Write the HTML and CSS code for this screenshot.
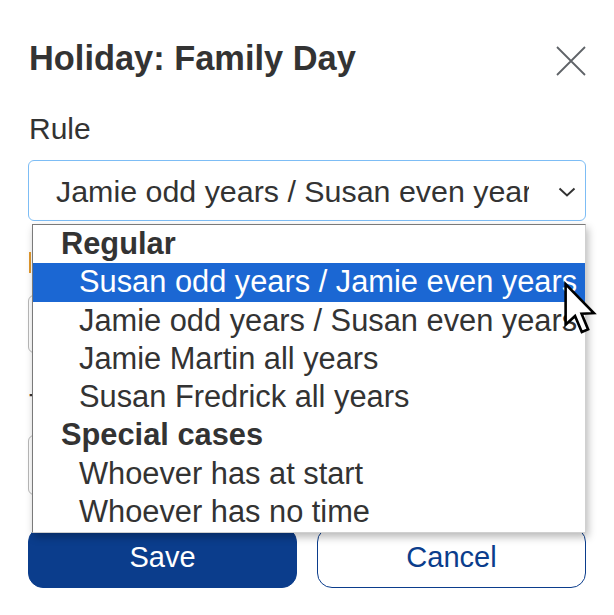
FILE: index.html
```html
<!DOCTYPE html>
<html lang="en">
<head>
<meta charset="utf-8">
<title>Holiday: Family Day</title>
<link rel="stylesheet" href="styles.css">
</head>
<body>
<div class="dialog">
  <div class="header">
    <h2 class="title">Holiday: Family Day</h2>
    <button class="close" aria-label="Close">
      <svg width="32" height="32" viewBox="0 0 32 32"><path d="M2 2 L30 30 M30 2 L2 30" stroke="#5f6368" stroke-width="1.8" fill="none"/></svg>
    </button>
  </div>

  <div class="label">Rule</div>
  <div class="select-wrap">
    <div class="select">
      <span class="select-text">Jamie odd years / Susan even years</span>
      <svg class="chevron" width="18" height="10" viewBox="0 0 18 10"><path d="M1.5 1.5 L9 8.5 L16.5 1.5" stroke="#333" stroke-width="2" fill="none"/></svg>
    </div>
    <div class="dropdown">
      <div class="group">Regular</div>
      <div class="option selected">Susan odd years / Jamie even years</div>
      <div class="option">Jamie odd years / Susan even years</div>
      <div class="option">Jamie Martin all years</div>
      <div class="option">Susan Fredrick all years</div>
      <div class="group">Special cases</div>
      <div class="option">Whoever has at start</div>
      <div class="option">Whoever has no time</div>
      <svg class="cursor" width="34" height="56" viewBox="0 0 13 21"><path d="M1 1 L1 16.5 L4.6 13.2 L7.2 19.3 L9.6 18.3 L7.1 12.3 L11.8 12.1 Z" fill="#fff" stroke="#000" stroke-width="1" stroke-linejoin="miter"/></svg>
    </div>
  </div>

  <div class="note"></div>
  <div class="field"></div>
  <div class="label">To</div>
  <div class="field field-b"></div>

  <div class="actions">
    <button class="btn btn-primary">Save</button>
    <button class="btn btn-secondary">Cancel</button>
  </div>
</div>
</body>
</html>
```

FILE: styles.css
```css
* { box-sizing: border-box; }

html, body {
  margin: 0;
  padding: 0;
  background: #ffffff;
}

body {
  font-family: "Liberation Sans", Arial, sans-serif;
  color: #333333;
}

.dialog {
  width: 614px;
  height: 615px;
  padding: 38px 28px 0 28px;
  overflow: hidden;
}

.header {
  display: flex;
  justify-content: space-between;
  align-items: flex-start;
}

.title {
  margin: 0 0 0 1px;
  font-size: 34.4px;
  line-height: 40px;
  font-weight: bold;
  color: #333333;
}

.close {
  border: 0;
  background: none;
  padding: 0;
  margin: 7px -1px 0 0;
  width: 32px;
  height: 32px;
  display: flex;
}

.label {
  margin-top: 33px;
  font-size: 30px;
  line-height: 36px;
  padding-left: 1px;
  color: #333333;
}

.select-wrap {
  position: relative;
  margin-top: 13px;
}

.select {
  height: 61px;
  border: 1.5px solid #7dbdf5;
  border-radius: 6px;
  display: flex;
  align-items: center;
  padding: 0 8px 0 27px;
  background: #fff;
}

.select-text {
  flex: 1;
  overflow: hidden;
  white-space: nowrap;
  font-size: 30.4px;
  line-height: 36px;
  color: #333;
  margin-right: 29px;
}

.chevron {
  margin-right: 1px;
  margin-top: 2px;
}

.dropdown {
  position: absolute;
  top: 64px;
  left: 4px;
  right: 0;
  background: #fff;
  border: 1px solid #7a7a7a;
  border-right-color: #d0d0d0;
  border-bottom-color: #d0d0d0;
  box-shadow: 2px 4px 8px rgba(0, 0, 0, 0.28);
  z-index: 5;
  padding-bottom: 1px;
}

.group {
  font-weight: bold;
  font-size: 30.8px;
  line-height: 38.25px;
  padding-left: 28px;
  color: #333;
}

.option {
  font-size: 30.8px;
  line-height: 38.25px;
  padding-left: 46px;
  white-space: nowrap;
  overflow: hidden;
  color: #333;
}

.option.selected {
  background: #1b67d3;
  color: #ffffff;
}

.cursor {
  position: absolute;
  left: 530px;
  top: 56px;
}

.note {
  margin-top: 31px;
  margin-left: 1px;
  height: 21px;
  border-left: 2px solid #e39a2d;
}

.field {
  margin-top: 22px;
  height: 58px;
  border: 1px solid #b8b8b8;
  border-radius: 6px;
}

.field-b {
  margin-top: 13px;
  height: 60px;
}

.actions {
  margin-top: 32px;
  display: grid;
  grid-template-columns: 1fr 1fr;
  column-gap: 20px;
}

.btn {
  height: 61px;
  border-radius: 15px;
  font-family: "Liberation Sans", Arial, sans-serif;
  font-size: 29px;
  padding: 0;
}

.btn-primary {
  background: #0b3d8c;
  color: #ffffff;
  border: 1px solid #0b3d8c;
}

.btn-secondary {
  background: #ffffff;
  color: #0b3d8c;
  border: 1px solid #0b3d8c;
}
```
